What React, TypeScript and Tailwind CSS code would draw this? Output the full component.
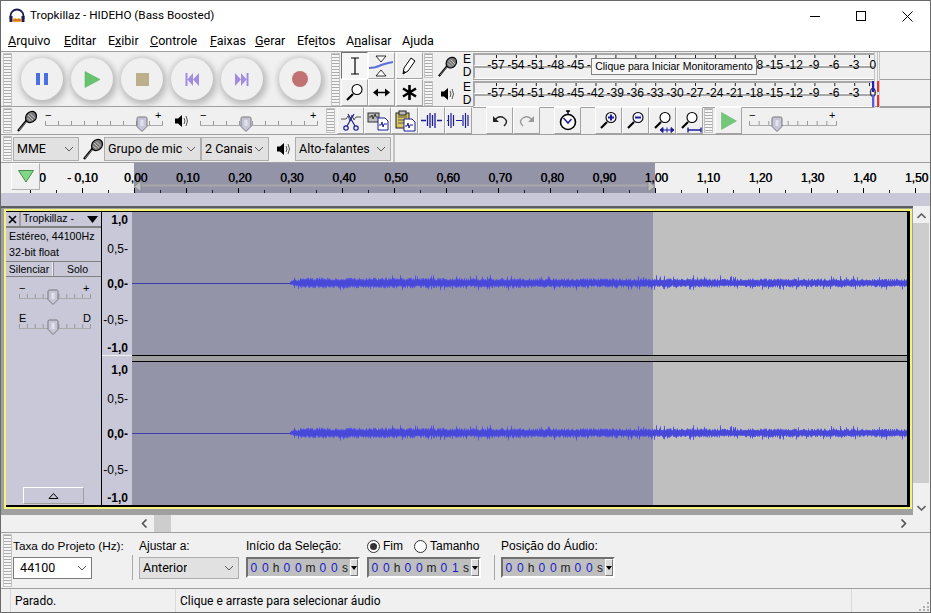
import React from "react";

const Grip = ({ h }: { h: number }) => (
  <div className="w-[9px] shrink-0 border border-[#c4c4c4] bg-[repeating-linear-gradient(180deg,#ababab_0,#ababab_1px,#f6f6f6_1px,#f6f6f6_3px)]" style={{ height: h }} />
);

const Raised = ({ w = 27, h = 27, pressed = false, children }: { w?: number; h?: number; pressed?: boolean; children?: React.ReactNode }) => (
  <div
    className={
      "flex shrink-0 items-center justify-center border " +
      (pressed ? "border-t-[#707070] border-l-[#707070] border-b-white border-r-white bg-[#f6f6f6]" : "border-t-white border-l-white border-b-[#a3a3a3] border-r-[#a3a3a3] bg-[#f0f0f0]")
    }
    style={{ width: w, height: h }}
  >
    {children}
  </div>
);

const Round = ({ children }: { children: React.ReactNode }) => (
  <div className="flex h-[42px] w-[42px] shrink-0 items-center justify-center rounded-full bg-[#f0f0f0] shadow-[2px_3px_6px_2px_#bcbcbc,-1px_-1px_5px_1px_#dcdcdc]">
    {children}
  </div>
);

const Mic = ({ s = 22 }: { s?: number }) => (
  <svg width={s} height={s} viewBox="0 0 22 22" className="shrink-0">
    <path d="M2 21 L11 10" stroke="#000" strokeWidth="2.2" />
    <path d="M3 20 L11 11" stroke="#fff" strokeWidth="0.5" />
    <ellipse cx="15" cy="7" rx="5" ry="6" transform="rotate(42 15 7)" fill="#777" stroke="#000" strokeWidth="1.2" />
    <path d="M12 5 L17 10 M14 3.5 L19 8.5 M11.5 8 L14.5 11" stroke="#ddd" strokeWidth="0.8" />
  </svg>
);

const Speaker = () => (
  <svg width="15" height="16" viewBox="0 0 15 16" className="shrink-0">
    <path d="M1 5.5h3L8 2v12L4 10.5H1z" fill="#000" />
    <path d="M10 5q2 3 0 6M12 3q3 5 0 10" stroke="#555" fill="none" strokeWidth="1" />
  </svg>
);

const Mag = ({ mode }: { mode?: "plus" | "minus" | "fit" | "sel" | "none" }) => (
  <svg width="24" height="24" viewBox="0 0 24 24">
    <path d="M4 19 L10 13" stroke="#000" strokeWidth="2.2" />
    <circle cx="14" cy="8.500" r="5" fill={mode === "plus" || mode === "minus" ? "#f4f4ff" : "#fff"} stroke="#000" strokeWidth="1.100" />
    {mode === "plus" && <path d="M11 8.500h6M14 5.500v6" stroke="#1d1d9c" strokeWidth="2" />}
    {mode === "minus" && <path d="M11 8.500h6" stroke="#1d1d9c" strokeWidth="2" />}
    {mode === "fit" && <path d="M9 21h14M9 21l3-2.500v5zM23 21l-3-2.500v5zM16 18.500v5" stroke="#1d1d9c" fill="#1d1d9c" strokeWidth="1" />}
    {mode === "sel" && <path d="M10 21h13M10 18.500v5M23 18.500v5" stroke="#1d1d9c" strokeWidth="1.400" />}
  </svg>
);

const Slider = ({ w, pos, left = "−", right = "+" }: { w: number; pos: number; left?: string; right?: string }) => {
  const ticks = Array.from({ length: 10 }, (_, i) => 0.5 + (i * (w - 1)) / 9);
  return (
    <svg width={w} height="24" viewBox={`0 -2 ${w} 24`} className="shrink-0">
      <text x="0" y="8" fontSize="11" fontFamily="Liberation Sans" fill="#000">{left}</text>
      <text x={w - 8} y="8" fontSize="11" fontFamily="Liberation Sans" fill="#000">{right}</text>
      {ticks.map((t) => (
        <path key={t} d={`M${t} 10v4`} stroke="#999" />
      ))}
      <path d={`M0 14.5h${w}`} stroke="#aaa" />
      <path d={`M${pos - 5} 7.5q0-1.5 1.5-1.5h7q1.500 0 1.500 1.500v8l-5 5-5-5z`} fill="#c6c6d8" stroke="#777" />
      <path d={`M${pos - 1.5} 10h3M${pos - 1.5} 12h3M${pos - 1.500} 14h3`} stroke="#fff" />
    </svg>
  );
};

const Sel = ({ w, label, bg = "bg-[#e1e1e1]", border = "border-[#adadad]", h = 22 }: { w: number; label: string; bg?: string; border?: string; h?: number }) => (
  <div className={`flex shrink-0 items-center justify-between overflow-hidden border pl-[3px] pr-[4px] ${bg} ${border}`} style={{ width: w, height: h }}>
    <span className="min-w-0 overflow-hidden whitespace-pre font-['Roboto',sans-serif] text-[12.500px] text-black">{label}</span>
    <svg width="10" height="6" viewBox="0 0 10 6" className="ml-[2px] shrink-0"><path d="M1 1l4 4 4-4" fill="none" stroke="#555" /></svg>
  </div>
);

const MeterStrip = () => (
  <div className="h-[13px] border-b border-l-2 border-t-2 border-b-white border-l-[#a8a8a8] border-t-[#a8a8a8] bg-[#f0f0f0]" />
);

const meterLabels = ["-57", "-54", "-51", "-48", "-45", "-42", "-39", "-36", "-33", "-30", "-27", "-24", "-21", "-18", "-15", "-12", "-9", "-6", "-3"];

const Meter = ({ peak }: { peak?: boolean }) => (
  <div className="flex h-[28px] w-full items-stretch border-b border-[#a0a0a0]">
    <div className="relative w-[401px] shrink-0 pt-[1px]">
      <MeterStrip />
      <MeterStrip />
      <svg width="401" height="26" className="absolute left-0 top-[1px]">
        {meterLabels.map((l, i) => (
          <path key={l} d={`M${23.500 + i * 19.9} 2v3`} stroke="#222" />
        ))}
        <path d="M396.500 2v3" stroke="#222" />
      </svg>
      <div className="absolute left-[13px] top-[6px] flex items-center text-[12px] leading-[15px]">
        {meterLabels.map((l) => (
          <span key={l} className="w-[19.9px] shrink-0 text-center text-black">{l}</span>
        ))}
        <span className="ml-[5px] w-[8px] text-center">0</span>
      </div>
      {peak && (
        <div className="absolute right-[-5px] top-[1px] flex h-[26px] gap-[3px]">
          <div className="flex w-[2px] flex-col justify-between"><div className="h-[11px] bg-[#1c1cd0]" /><div className="h-[12px] bg-[#5a5af0]" /></div>
          <div className="flex w-[2px] flex-col justify-between"><div className="h-[11px] bg-[#f03030]" /><div className="h-[12px] bg-[#f03030]" /></div>
        </div>
      )}
    </div>
  </div>
);

const TimeField = ({ last = "0" }: { last?: string }) => {
  const D = ({ c }: { c: string }) => <span className="w-[11.500px] shrink-0 text-center text-[#1a1ac8]">{c}</span>;
  const U = ({ c, w = 10 }: { c: string; w?: number }) => <span className="shrink-0 text-center text-[#222]" style={{ width: w }}>{c}</span>;
  return (
    <div className="flex h-[21px] w-[114px] shrink-0 items-center border-2 border-t-[#707070] border-l-[#707070] border-b-white border-r-white bg-[#bfbfbf] text-[12px]">
      <D c="0" /><D c="0" /><U c="h" /><D c="0" /><D c="0" /><U c="m" w={13} /><D c="0" /><D c={last} /><U c="s" />
      <div className="ml-auto flex h-full w-[8px] shrink-0 items-center justify-center border border-t-white border-l-white border-b-[#777] border-r-[#777] bg-[#dcdcdc]">
        <svg width="6" height="4" viewBox="0 0 6 4" className="shrink-0"><path d="M0 0h6L3 4z" fill="#000" /></svg>
      </div>
    </div>
  );
};

const Wave = () => {
  let seed = 12345;
  const rnd = () => ((seed = (seed * 1664525 + 1013904223) >>> 0) / 4294967296);
  let d = "";
  let d2 = "";
  for (let x = 158; x < 775; x++) {
    const t = (x - 158) / 617;
    const base = x < 170 ? 2 + (x - 158) * 0.25 : 5 - 1.1 * t;
    const up = base * (0.6 + rnd() * 0.5) + (rnd() > 0.93 ? 3 : 0);
    const dn = base * (0.6 + rnd() * 0.5) + (rnd() > 0.93 ? 2.500 : 0);
    d += `M${x + 0.5} ${71 - up}V${71 + dn}`;
    d2 += `M${x + 0.5} ${71 - up * 0.7}V${71 + dn * 0.7}`;
  }
  return (
    <svg width="775" height="143" viewBox="0 0 775 143" className="absolute inset-0">
      <path d="M0 71.500H160" stroke="#3d3db0" />
      <path d={d} stroke="#5a5ae0" />
      <path d={d2} stroke="#4848d8" />
    </svg>
  );
};

const Channel = () => (
  <div className="relative flex h-[143px] w-[775px]">
    <div className="w-[521px] bg-[#9494a9]" />
    <div className="flex-1 bg-[#bfbfbf]" />
    <Wave />
  </div>
);

const VRuler = () => (
  <div className="flex h-[143px] w-[30px] flex-col items-end bg-[#c8c8d8] pr-[4px] font-['Liberation_Sans',sans-serif] text-[12px] leading-[14px] text-black">
    <div className="mt-[1px] font-bold">1,0</div>
    <div className="mt-[15px]">0,5-</div>
    <div className="mt-[21px] font-bold">0,0-</div>
    <div className="mt-[22px]">-0,5-</div>
    <div className="mt-[14px] font-bold">-1,0</div>
  </div>
);

const rulerLabels = ["0,10", "0,20", "0,30", "0,40", "0,50", "0,60", "0,70", "0,80", "0,90", "1,00", "1,10", "1,20", "1,30", "1,40", "1,50"];

const Ruler = () => {
  let ticks = "";
  let majors = "";
  for (let i = -4; i <= 30; i++) {
    const x = 133 + i * 26.03;
    const r = Math.round(x) + 0.5;
    if (i % 2 === 0) majors += `M${r} 25v5`;
    else ticks += `M${r} 27v3`;
  }
  return (
    <div className="relative h-[30px] w-full shrink-0 overflow-hidden bg-[#f0f0f0]">
      <div className="absolute left-[133px] top-0 h-[30px] w-[521px] bg-[#9494a9]" />
      <svg width="931" height="30" className="absolute left-0 top-0">
        <path d={majors} stroke="#000" />
        <path d={ticks} stroke="#222" />
        <path d="M139 22.500H647" stroke="#a8a8a8" strokeWidth="2" />
        <path d="M133 23.500 L140 18 V29 Z" fill="#c0c0c0" stroke="#8a8a8a" />
        <path d="M654 23.500 L647 18 V29 Z" fill="#c0c0c0" stroke="#8a8a8a" />
      </svg>
      <div className="relative flex pl-[38px] pt-[8px] font-['Liberation_Sans',sans-serif] text-[12px] leading-[14px] text-black [text-shadow:0.4px_0_0_#000]">
        <span className="w-[28px] shrink-0">0</span>
        <span className="w-[57px] shrink-0">- 0,10</span>
        <span className="w-[52.070px] shrink-0">0,00</span>
        {rulerLabels.map((l) => (
          <span key={l} className="w-[52.070px] shrink-0">{l}</span>
        ))}
      </div>
      <div className="absolute left-[10px] top-0 flex h-[27px] w-[29px] items-center justify-center border border-[#b0b0b0] border-t-white border-l-white bg-[#f0f0f0]">
        <svg width="16" height="13" viewBox="0 0 16 13"><path d="M0.500 0.500h15L8 12z" fill="#7fd884" stroke="#4a8a50" /></svg>
      </div>
    </div>
  );
};

export default function App() {
  const menu: [string, string, string, number][] = [
    ["", "A", "rquivo", 56], ["", "E", "ditar", 44], ["E", "x", "ibir", 42], ["", "C", "ontrole", 60],
    ["", "F", "aixas", 45], ["", "G", "erar", 42], ["Efe", "i", "tos", 49], ["A", "n", "alisar", 56], ["A", "j", "uda", 40],
  ];
  return (
    <div className="relative flex h-[613px] w-[931px] flex-col overflow-hidden border border-[#6a6a6a] bg-[#f0f0f0] font-['Liberation_Sans',sans-serif] text-black">
      {/* title */}
      <div className="flex h-[30px] shrink-0 items-center bg-white pl-[8px]">
        <svg width="16" height="16" viewBox="0 0 16 16" className="shrink-0">
          <path d="M1.500 11V8a6.500 6.500 0 0 1 13 0v3" fill="none" stroke="#1b1b50" strokeWidth="1.800" />
          <rect x="0.500" y="8" width="3" height="6" fill="#1b1b50" />
          <rect x="12.500" y="8" width="3" height="6" fill="#1b1b50" />
          <path d="M4 14V11l2-1 2 1 2-1 2 1v3z" fill="#f2a020" />
          <path d="M4.500 12h7" stroke="#d04020" />
        </svg>
        <span className="ml-[5px] font-['Roboto',sans-serif] text-[11.700px] text-black">Tropkillaz - HIDEHO (Bass Boosted)</span>
        <div className="ml-auto flex h-full items-center">
          <div className="flex w-[46px] justify-center"><div className="h-[1px] w-[10px] bg-black" /></div>
          <div className="flex w-[46px] justify-center"><div className="h-[10px] w-[10px] border border-black" /></div>
          <div className="flex w-[46px] justify-center">
            <svg width="11" height="11" viewBox="0 0 11 11"><path d="M0.500 0.500l10 10M10.500 0.500l-10 10" stroke="#000" /></svg>
          </div>
        </div>
      </div>
      {/* menu */}
      <div className="flex h-[20px] shrink-0 items-center bg-white pl-[7px] font-['Roboto',sans-serif] text-[12.500px]">
        {menu.map(([a, b, c, w]) => (
          <span key={a + b + c} className="shrink-0 whitespace-nowrap" style={{ width: w }}>
            {a}<span className="underline">{b}</span>{c}
          </span>
        ))}
      </div>
      {/* row 1 */}
      <div className="flex h-[56px] shrink-0 items-stretch border-y border-[#a0a0a0] pb-0">
        <div className="ml-[2px] mt-[1px]"><Grip h={53} /></div>
        <div className="flex w-[319px] shrink-0 items-center pl-[9px]">
          <div className="flex gap-[8px]">
            <Round><svg width="14" height="14" viewBox="0 0 14 14"><path d="M1 1h4v12H1zM9 1h4v12H9z" fill="#4a6fe0" /></svg></Round>
            <Round><svg width="16" height="17" viewBox="0 0 16 17"><path d="M1 0.500v16l15-8z" fill="#66c46e" stroke="#55a95c" strokeWidth="0.500" /></svg></Round>
            <Round><div className="h-[13px] w-[13px] bg-[#bcb08c]" /></Round>
            <Round><svg width="14" height="13" viewBox="0 0 14 13"><path d="M0.500 0h2v13h-2zM8 0v13L2.500 6.500zM14 0v13L8 6.500z" fill="#a08ce0" /></svg></Round>
            <Round><svg width="14" height="13" viewBox="0 0 14 13"><path d="M11.500 0h2v13h-2zM6 0v13l5.500-6.500zM0 0v13l6-6.500z" fill="#a08ce0" /></svg></Round>
            <div className="ml-[8px]">
              <Round><div className="h-[16px] w-[16px] rounded-full bg-[#c27272]" /></Round>
            </div>
          </div>
        </div>
        <div className="mt-[1px]"><Grip h={53} /></div>
        <div className="ml-[1px] grid w-[82px] shrink-0 grid-cols-3 grid-rows-2">
          <Raised pressed>
            <svg width="12" height="18" viewBox="0 0 12 18"><path d="M2 1h8M6 1v16M2 17h8" stroke="#000" strokeWidth="1.200" fill="none" /></svg>
          </Raised>
          <Raised>
            <svg width="25" height="22" viewBox="0 0 25 22">
              <path d="M7 1h10l-5 6zM7 21h10l-5-6z" fill="#fff" stroke="#000" strokeWidth="0.800" />
              <path d="M0 13 Q6 13 10 11 T24 7" stroke="#5b6fe0" strokeWidth="2" fill="none" />
            </svg>
          </Raised>
          <Raised>
            <svg width="16" height="20" viewBox="0 0 16 20"><path d="M2 18l1-6 7-10 4 3-7 10z" fill="#fff" stroke="#000" /><path d="M2 18l1-3 2 1z" fill="#000" /></svg>
          </Raised>
          <Raised><Mag mode="none" /></Raised>
          <Raised>
            <svg width="17" height="9" viewBox="0 0 17 9"><path d="M3 4.500h11" stroke="#000" strokeWidth="1.500" /><path d="M0 4.500l5-4v8zM17 4.500l-5-4v8z" fill="#000" /></svg>
          </Raised>
          <Raised>
            <svg width="15" height="15" viewBox="0 0 15 15"><path d="M7.500 0v15M1 3.500l13 8M14 3.500l-13 8" stroke="#000" strokeWidth="2.600" /></svg>
          </Raised>
        </div>
        <div className="ml-[1px] flex w-[507px] shrink-0 flex-col">
          {[0, 1].map((i) => (
            <div key={i} className="flex h-[28px] shrink-0 items-stretch">
              <div className="mt-[1px]"><Grip h={25} /></div>
              <div className="flex w-[28px] shrink-0 items-center justify-center">{i === 0 ? <Mic s={21} /> : <Speaker />}</div>
              <div className="flex w-[12px] shrink-0 flex-col items-center pt-[1px] text-[12px] leading-[13px]"><span>E</span><span>D</span></div>
              <div className="w-[401px] shrink-0"><Meter peak={i === 1} /></div>
              <div className="w-[3px] border-l border-[#c4c4c4]" />
              <div className="w-[3px] border-x border-[#c4c4c4]" />
              <div className="flex-1 border-b border-[#a0a0a0]" />
            </div>
          ))}
        </div>
      </div>
      {/* row 2 */}
      <div className="flex h-[28px] shrink-0 items-center border-b border-[#a0a0a0]">
        <div className="ml-[2px]"><Grip h={25} /></div>
        <div className="ml-[4px] w-[29px]"><Mic /></div>
        <Slider w={118} pos={97} />
        <div className="ml-[11px]"><Speaker /></div>
        <div className="ml-[11px]"><Slider w={118} pos={46} /></div>
        <div className="ml-[8px]"><Grip h={25} /></div>
        <div className="ml-[2px] flex">
          <Raised>
            <svg width="22" height="20" viewBox="0 0 22 20"><path d="M1 8h5l2-3 2 5 2-6 2 5 2-3h5" stroke="#555" fill="none" /><path d="M14 3L7 15M8 3l7 12" stroke="#1d1d9c" strokeWidth="1.200" /><circle cx="6" cy="17" r="2.200" fill="none" stroke="#1d1d9c" strokeWidth="1.200" /><circle cx="16" cy="17" r="2.200" fill="none" stroke="#1d1d9c" strokeWidth="1.200" /></svg>
          </Raised>
          <Raised>
            <svg width="22" height="20" viewBox="0 0 22 20"><rect x="1" y="2" width="11" height="9" fill="#bbb" stroke="#333" /><path d="M2 6h2l1-2 1 4 2-5 1 3h2" stroke="#333" fill="none" /><path d="M11 7h7l3 3v9H11z" fill="#fff" stroke="#1d1d9c" /><path d="M12 14h2l1-3 1 5 1-3h3" stroke="#1d1d9c" fill="none" /></svg>
          </Raised>
          <Raised>
            <svg width="22" height="22" viewBox="0 0 22 22"><rect x="2" y="3" width="13" height="15" fill="#d9c65c" stroke="#222" /><rect x="5" y="1" width="7" height="4" fill="#bbb" stroke="#222" /><path d="M4 7h9M4 10h9M4 13h9" stroke="#555" /><path d="M10 9h8l3 3v9H10z" fill="#fff" stroke="#1d1d9c" /><path d="M11 16h2l1-3 1 5 1-3h3" stroke="#1d1d9c" fill="none" /></svg>
          </Raised>
          <Raised>
            <svg width="21" height="15" viewBox="0 0 21 15"><path d="M0 7.500h5M16 7.500h5M6.500 2v11M9 0v15M11.500 2v11M14 0v15" stroke="#1d1d9c" strokeWidth="1.300" /></svg>
          </Raised>
          <Raised>
            <svg width="23" height="15" viewBox="0 0 23 15"><path d="M0 7.500h1M1.500 2v11M4 0v15M6.500 2v11M9 7.500h6M16 2v11M18.500 0v15M21 2v11" stroke="#1d1d9c" strokeWidth="1.200" /></svg>
          </Raised>
        </div>
        <div className="ml-[14px] flex">
          <Raised><svg width="16" height="12" viewBox="0 0 16 12"><path d="M2.500 5.500Q7-0.500 12 3T12 11" stroke="#222" strokeWidth="1.400" fill="none" /><path d="M1 1v6h6z" fill="#222" /></svg></Raised>
          <Raised><svg width="16" height="12" viewBox="0 0 16 12"><path d="M13.500 5.500Q9-0.500 4 3T4 11" stroke="#9a9a9a" strokeWidth="1.400" fill="none" /><path d="M15 1v6H9z" fill="#9a9a9a" /></svg></Raised>
        </div>
        <div className="ml-[14px]">
          <Raised><svg width="18" height="21" viewBox="0 0 18 21"><circle cx="9" cy="12" r="7.500" fill="#fff" stroke="#000" strokeWidth="1.600" /><path d="M7 1h4M9 1v3" stroke="#000" strokeWidth="1.500" /><path d="M4.500 8L9 13l3.500-4" stroke="#1d1d9c" strokeWidth="1.500" fill="none" /></svg></Raised>
        </div>
        <div className="ml-[14px] flex">
          <Raised><Mag mode="plus" /></Raised>
          <Raised><Mag mode="minus" /></Raised>
          <Raised><Mag mode="fit" /></Raised>
          <Raised><Mag mode="sel" /></Raised>
        </div>
        <div className="ml-[1px]"><Grip h={25} /></div>
        <div className="ml-[2px]">
          <Raised><svg width="16" height="18" viewBox="0 0 16 18"><path d="M0.500 0.500v17L15.500 9z" fill="#72c878" stroke="#5fb065" strokeWidth="0.500" /></svg></Raised>
        </div>
        <div className="ml-[7px]"><Slider w={88} pos={28} /></div>
      </div>
      {/* row 3 */}
      <div className="flex h-[28px] shrink-0 items-center border-b border-[#a0a0a0]">
        <div className="ml-[2px]"><Grip h={25} /></div>
        <div className="ml-[1px] mt-[1px]"><Sel w={66} h={24} label="MME" /></div>
        <div className="ml-[3px]"><Mic /></div>
        <div className="ml-0 mt-[1px]"><Sel w={97} h={24} label="Grupo de mic" /></div>
        <div className="mt-[1px]"><Sel w={68} h={24} label="2 Canais" /></div>
        <div className="ml-[7px]"><Speaker /></div>
        <div className="ml-[4px] mt-[1px]"><Sel w={96} h={24} label="Alto-falantes" /></div>
        <div className="ml-[2px] h-full w-[2px] border-x border-[#c4c4c4]" />
      </div>
      {/* ruler */}
      <Ruler />
      <div className="h-[13px] shrink-0 bg-[#c8c8d8]" />
      {/* track panel */}
      <div className="relative flex h-[326px] shrink-0 bg-[#f0f0f0]">
        <div className="flex h-[309px] w-[912px] flex-col border-t-2 border-[#5c5c5c] bg-[#a0a0a0] pl-[3px] pr-[1px] pt-[1px]">
          <div className="border-2 border-[#f4f47c]">
            <div className="flex h-[296px] border-b-2 border-r-2 border-t border-black bg-black">
              <div className="flex w-[95px] shrink-0 flex-col bg-[#c8c8d8] text-[10px]">
                <div className="flex h-[16px] shrink-0 items-stretch border-b-2 border-[#808080]">
                  <div className="flex w-[15px] items-center justify-center border-r-2 border-[#a0a0a0]">
                    <svg width="9" height="9" viewBox="0 0 9 9"><path d="M1 1l7 7M8 1L1 8" stroke="#000" strokeWidth="1.600" /></svg>
                  </div>
                  <div className="flex flex-1 items-center justify-between pl-[2px] pr-[3px] text-[10.500px]">
                    <span className="whitespace-nowrap">Tropkillaz -</span>
                    <svg width="11" height="7" viewBox="0 0 11 7"><path d="M0 0h11L5.500 7z" fill="#000" /></svg>
                  </div>
                </div>
                <div className="whitespace-nowrap pl-[3px] text-[10.700px] leading-[16px]">Estéreo, 44100Hz<br />32-bit float</div>
                <div className="mt-[1px] flex h-[16px] shrink-0 border-y border-[#808080] text-[10.500px] leading-[14px]">
                  <div className="w-[47px] border-r border-[#f0f0f0] text-center">Silenciar</div>
                  <div className="flex-1 border-l border-[#909090] text-center">Solo</div>
                </div>
                <div className="mt-[5px] flex flex-col items-start gap-[6px] pl-[13px]">
                  <Slider w={72} pos={34} />
                  <Slider w={72} pos={34} left="E" right="D" />
                </div>
                <div className="mt-auto flex justify-center pb-[1px]">
                  <div className="flex h-[17px] w-[61px] items-center justify-center border border-[#a0a0a0] border-t-white border-l-white">
                    <svg width="11" height="6" viewBox="0 0 11 6"><path d="M5.500 0.500L10 5.500H1z" fill="none" stroke="#000" /></svg>
                  </div>
                </div>
              </div>
              <div className="w-[1px] shrink-0 bg-black" />
              <div className="flex w-[30px] shrink-0 flex-col">
                <VRuler />
                <div className="h-[7px] border-t border-[#f0f0f0] bg-[#c8c8d8]" />
                <VRuler />
              </div>
              <div className="flex w-[775px] shrink-0 flex-col">
                <Channel />
                <div className="h-[7px] border-y border-black bg-[#a0a0a0]" />
                <Channel />
              </div>
            </div>
          </div>
        </div>
        <div className="flex h-[309px] w-[16px] flex-col items-center pt-[2px]">
          <div className="flex h-[15px] items-center"><svg width="9" height="6" viewBox="0 0 9 6"><path d="M0.500 5l4-4 4 4" fill="none" stroke="#606060" strokeWidth="1.600" /></svg></div>
          <div className="h-[260px] w-full bg-[#cdcdcd]" />
          <div className="mt-auto flex h-[15px] items-center"><svg width="9" height="6" viewBox="0 0 9 6"><path d="M0.500 1l4 4 4-4" fill="none" stroke="#606060" strokeWidth="1.600" /></svg></div>
        </div>
        <div className="absolute bottom-0 left-0 flex h-[17px] w-full items-center pl-[139px]">
          <svg width="9" height="9" viewBox="0 0 6 9"><path d="M5 0.500l-4 4 4 4" fill="none" stroke="#505050" strokeWidth="1.600" /></svg>
          <div className="ml-[5px] h-full w-[17px] bg-[#cdcdcd]" />
          <div className="ml-[728px]"><svg width="9" height="9" viewBox="0 0 6 9"><path d="M1 0.500l4 4-4 4" fill="none" stroke="#505050" strokeWidth="1.600" /></svg></div>
        </div>
      </div>
      {/* selection bar */}
      <div className="flex h-[57px] shrink-0 items-start border-y border-[#a0a0a0]">
        <div className="ml-[2px] mt-[1px]"><Grip h={53} /></div>
        <div className="ml-[1px] flex w-[119px] shrink-0 flex-col">
          <span className="mt-[6px] whitespace-nowrap text-[11.800px] leading-[14px]">Taxa do Projeto (Hz):</span>
          <div className="mt-[4px]"><Sel w={79} label=" 44100" bg="bg-white" border="border-[#7a7a7a]" /></div>
        </div>
        <div className="mt-[22px] h-[25px] w-[1px] shrink-0 bg-[#a8a8a8]" />
        <div className="ml-[6px] flex w-[107px] shrink-0 flex-col">
          <span className="mt-[6px] text-[12px] leading-[14px]">Ajustar a:</span>
          <div className="mt-[4px]"><Sel w={100} label="Anterior" /></div>
        </div>
        <div className="flex w-[121px] shrink-0 flex-col">
          <span className="mt-[6px] whitespace-nowrap text-[12px] leading-[14px]">Início da Seleção:</span>
          <div className="mt-[4px]"><TimeField /></div>
        </div>
        <div className="flex w-[127px] shrink-0 flex-col">
          <div className="mt-[6px] flex items-center text-[12px] leading-[14px]">
            <div className="flex h-[13px] w-[13px] items-center justify-center rounded-full border border-[#333] bg-white"><div className="h-[7px] w-[7px] rounded-full bg-[#333]" /></div>
            <span className="ml-[3px] w-[31px]">Fim</span>
            <div className="h-[13px] w-[13px] rounded-full border border-[#333] bg-white" />
            <span className="ml-[3px]">Tamanho</span>
          </div>
          <div className="mt-[4px]"><TimeField last="1" /></div>
        </div>
        <div className="mt-[22px] h-[25px] w-[1px] shrink-0 bg-[#a8a8a8]" />
        <div className="ml-[6px] flex w-[121px] shrink-0 flex-col">
          <span className="mt-[6px] whitespace-nowrap text-[12px] leading-[14px]">Posição do Áudio:</span>
          <div className="mt-[4px]"><TimeField /></div>
        </div>
      </div>
      {/* status */}
      <div className="flex min-h-0 flex-1 items-center font-['Roboto',sans-serif] text-[12px]">
        <div className="h-full w-[10px] border-r border-[#d8d8d8]" />
        <div className="w-[164px] pl-[4px]">Parado.</div>
        <div className="flex h-full flex-1 items-center border-x border-[#d8d8d8] pl-[4px]">Clique e arraste para selecionar áudio</div>
        <div className="relative h-full w-[78px]">
          <svg width="10" height="10" viewBox="0 0 10 10" className="absolute bottom-[1px] right-[1px]"><path d="M8 1h2v2H8zM4 5h2v2H4zM8 5h2v2H8zM0 8h2v2H0zM4 8h2v2H4zM8 8h2v2H8z" fill="#b0b0b0" /></svg>
        </div>
      </div>
      {/* tooltip */}
      <div className="absolute left-[590px] top-[57px] flex h-[17px] w-[166px] items-center justify-center border border-[#808080] bg-[#f7f7f7] text-[10.500px] text-black">Clique para Iniciar Monitoramento</div>
    </div>
  );
}
